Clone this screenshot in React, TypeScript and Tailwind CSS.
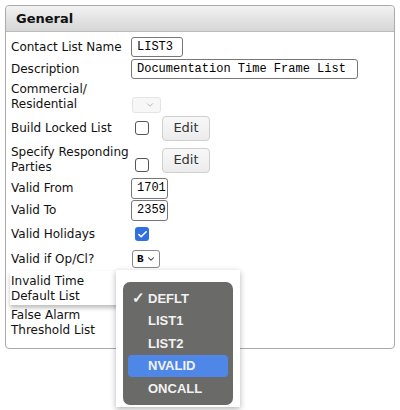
import { Check, ChevronDown } from 'lucide-react';

const label = "font-['DejaVu_Sans',Verdana,sans-serif] text-[12px] leading-[15px] text-[#111]";
const field = "h-[20px] whitespace-nowrap rounded-[3px] border border-[#777] bg-white px-[5px] font-['Liberation_Mono',monospace] text-[12px] leading-[18px] text-black";

function Row({ h, name, children }: { h: string; name: React.ReactNode; children?: React.ReactNode }) {
    return (
        <div className={`flex items-center ${h}`}>
            <div className={`${label} w-[120px] shrink-0`}>{name}</div>
            <div className="flex items-center">{children}</div>
        </div>
    );
}

function Checkbox({ checked = false }: { checked?: boolean }) {
    if (checked) {
        return (
            <div className="ml-[4px] flex h-[14px] w-[14px] items-center justify-center rounded-[3px] bg-[#2f6fe0]">
                <Check size={11} strokeWidth={3.5} color="white" />
            </div>
        );
    }
    return <div className="ml-[4px] h-[14px] w-[14px] rounded-[3px] border border-[#555] bg-white" />;
}

function EditButton() {
    return (
        <div className="ml-[13px] flex h-[25px] w-[48px] items-center justify-center rounded-[4px] border border-[#cfcfcf] bg-gradient-to-b from-[#f8f8f8] to-[#ececec] font-['DejaVu_Sans',sans-serif] text-[13px] text-[#333]">
            Edit
        </div>
    );
}

const options = ['DEFLT', 'LIST1', 'LIST2', 'NVALID', 'ONCALL'];

export default function App() {
    return (
        <div className="relative h-[410px] w-[400px] bg-white">
            <div className="absolute left-[5px] top-[5px] w-[390px] rounded-[4px] border border-[#aaa] bg-white pb-[7px]">
                <div className="flex h-[26px] items-center rounded-t-[4px] border-b border-[#bbb] bg-gradient-to-b from-[#f2f2f2] to-[#d6d6d6] pl-[10px] font-['DejaVu_Sans',sans-serif] text-[13px] font-bold text-[#111]">
                    General
                </div>
                <div className="flex flex-col pl-[5px] pt-[4px]">
                    <Row h="h-[22px]" name="Contact List Name">
                        <div className={`${field} w-[52px]`}>LIST3</div>
                    </Row>
                    <Row h="h-[22px]" name="Description">
                        <div className={`${field} w-[227px]`}>Documentation Time Frame List</div>
                    </Row>
                    <Row h="h-[34px]" name={<>Commercial/<br />Residential</>}>
                        <div className="ml-[1px] mt-[16px] flex h-[16px] w-[29px] items-center justify-end rounded-[3px] border border-[#e4e4e4] bg-[#f7f7f7] pr-[5px]">
                            <ChevronDown size={10} color="#aaa" />
                        </div>
                    </Row>
                    <Row h="h-[28px]" name="Build Locked List">
                        <Checkbox />
                        <EditButton />
                    </Row>
                    <Row h="h-[36px]" name={<>Specify Responding<br />Parties</>}>
                        <div className="mt-[10px]">
                            <Checkbox />
                        </div>
                        <EditButton />
                    </Row>
                    <Row h="h-[21px]" name="Valid From">
                        <div className={`${field} h-[21px] w-[37px] px-[3px]`}>1701</div>
                    </Row>
                    <Row h="h-[22px]" name="Valid To">
                        <div className={`${field} h-[21px] w-[37px] px-[3px]`}>2359</div>
                    </Row>
                    <Row h="h-[26px]" name="Valid Holidays">
                        <Checkbox checked />
                    </Row>
                    <Row h="h-[24px]" name="Valid if Op/Cl?">
                        <div className="ml-[1px] flex h-[18px] w-[28px] items-center justify-between rounded-[3px] border border-[#888] bg-white pl-[4px] pr-[3px] font-['Liberation_Mono',monospace] text-[11px] font-bold text-black">
                            B
                            <ChevronDown size={10} strokeWidth={2.5} color="#333" />
                        </div>
                    </Row>
                    <div className="-ml-[1px] flex h-[34px] w-[112px] items-center bg-white pl-[1px] pt-[2px] shadow-[0_3px_4px_rgba(0,0,0,0.25)]">
                        <div className={label}>Invalid Time<br />Default List</div>
                    </div>
                    <Row h="h-[36px]" name={<>False Alarm<br />Threshold List</>} />
                </div>
            </div>

            <div className="absolute left-[116px] top-[270px] h-[137px] w-[124px] bg-white shadow-[0_2px_6px_rgba(0,0,0,0.3)]">
                <div className="absolute left-[7px] top-[12px] flex w-[110px] flex-col rounded-[7px] bg-[#6a6a68] px-[5px] py-[5px] font-['Liberation_Sans',Arial,sans-serif] text-[13px] font-bold text-[#f2f2f2]">
                    {options.map((o) => (
                        <div
                            key={o}
                            className={`flex h-[22.5px] items-center rounded-[4px] ${o === 'NVALID' ? 'bg-[#4f87e9]' : ''}`}
                        >
                            <span className="w-[20px] pl-[4px] text-[15px]">{o === 'DEFLT' ? '✓' : ''}</span>
                            {o}
                        </div>
                    ))}
                </div>
            </div>
        </div>
    );
}
